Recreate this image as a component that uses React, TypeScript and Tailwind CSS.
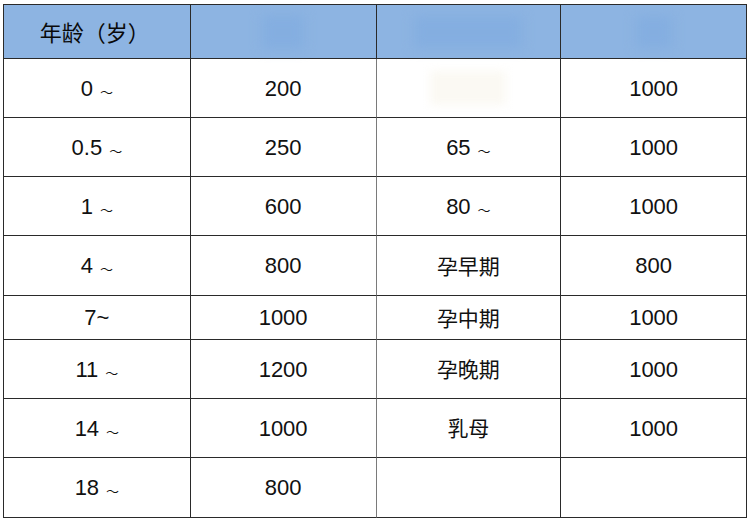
import React from 'react';

type Row = { h: string; age: string; a: string; group: string; b: string; tight?: boolean };

const ROWS: Row[] = [
  { h: 'h-[59px]', age: '0', a: '200', group: '', b: '1000' },
  { h: 'h-[59px]', age: '0.5', a: '250', group: '65', b: '1000' },
  { h: 'h-[59px]', age: '1', a: '600', group: '80', b: '1000' },
  { h: 'h-[60px]', age: '4', a: '800', group: '孕早期', b: '800' },
  { h: 'h-[44px]', age: '7', a: '1000', group: '孕中期', b: '1000', tight: true },
  { h: 'h-[59px]', age: '11', a: '1200', group: '孕晚期', b: '1000' },
  { h: 'h-[59px]', age: '14', a: '1000', group: '乳母', b: '1000' },
  { h: 'h-[60px]', age: '18', a: '800', group: '', b: '' },
];

const num = "font-['Liberation_Sans',Arial,sans-serif] text-[22px] text-[#111]";
const cjk = "font-['Noto_Sans_CJK_SC',sans-serif] text-[21px] text-[#111]";

const Range: React.FC<{ value: string; tight?: boolean }> = ({ value, tight }) =>
  tight ? (
    <span className={num}>{value}~</span>
  ) : (
    <span className={num}>
      {value}
      <span className="ml-[7px] font-['Noto_Sans_CJK_SC',sans-serif] text-[13px] relative top-[1px]">～</span>
    </span>
  );

const isCjk = (s: string) => /[\u4e00-\u9fff]/.test(s);

const App: React.FC = () => {
  return (
    <div className="w-[750px] h-[520px] bg-white pt-[4px] pl-[3px]">
      <div className="w-[744px] border-t border-l border-[#2a2a2a]">
        {/* Header */}
        <div className="flex h-[54px] bg-[#8db4e2]">
          <div className="w-[187px] h-full border-r border-b border-[#2a2a2a] flex items-center justify-center pr-[4px]">
            <span className="font-['Noto_Sans_CJK_SC',sans-serif] text-[22px] text-[#0a0a0a]">年龄（岁）</span>
          </div>
          <div className="w-[186px] h-full border-r border-b border-[#2a2a2a] flex items-center justify-center">
            <span className="w-[42px] h-[34px] bg-[#84aee0] blur-[6px]" />
          </div>
          <div className="w-[185px] h-full border-r border-b border-[#2a2a2a] flex items-center justify-center">
            <span className="w-[108px] h-[32px] bg-[#84aee0] blur-[6px]" />
          </div>
          <div className="w-[186px] h-full border-r border-b border-[#2a2a2a] flex items-center justify-center">
            <span className="w-[36px] h-[32px] bg-[#84aee0] blur-[6px]" />
          </div>
        </div>

        {ROWS.map((row, i) => (
          <div key={i} className={`flex ${row.h}`}>
            <div className="w-[187px] h-full border-r border-b border-[#2a2a2a] flex items-center justify-center">
              <Range value={row.age} tight={row.tight} />
            </div>
            <div className="w-[186px] h-full border-r border-b border-r-[#7a7a7a] border-b-[#2a2a2a] flex items-center justify-center">
              <span className={num}>{row.a}</span>
            </div>
            <div className="w-[185px] h-full border-r border-b border-[#2a2a2a] flex items-center justify-center">
              {i === 0 ? (
                <span className="w-[76px] h-[34px] bg-[#fbf9f3] blur-[5px]" />
              ) : isCjk(row.group) ? (
                <span className={cjk}>{row.group}</span>
              ) : row.group ? (
                <Range value={row.group} />
              ) : null}
            </div>
            <div className="w-[186px] h-full border-r border-b border-[#2a2a2a] flex items-center justify-center">
              <span className={num}>{row.b}</span>
            </div>
          </div>
        ))}
      </div>
    </div>
  );
};

export default App;
